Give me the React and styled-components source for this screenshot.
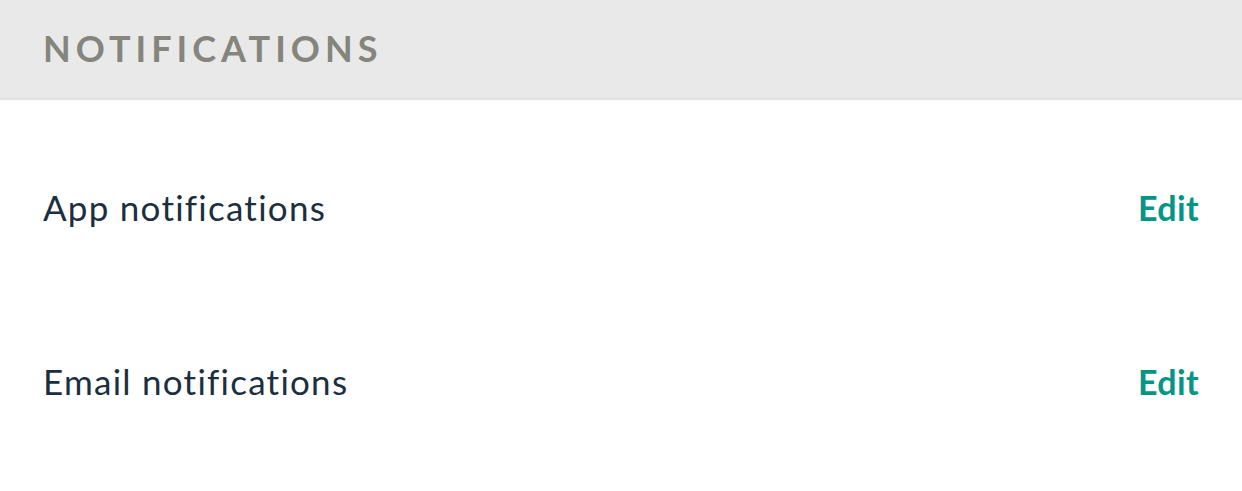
import React from "react";
import styled, { createGlobalStyle } from "styled-components";

const Global = createGlobalStyle`
  html, body { margin: 0; padding: 0; background: #ffffff; }
  body { font-family: Lato, "Noto Sans", sans-serif; }
`;

const Page = styled.div`
  width: 1242px;
`;

const Header = styled.div`
  height: 98px;
  background: #e9e9e9;
  border-bottom: 2px solid #e2e2e0;
  display: flex;
  align-items: center;
  padding: 0 43px;
`;

const Title = styled.h2`
  margin: 0;
  margin-top: -2px;
  font-size: 36px;
  font-weight: 700;
  letter-spacing: 5px;
  color: #85857d;
  text-transform: uppercase;
`;

const List = styled.div`
  padding-top: 20px;
  display: flex;
  flex-direction: column;
`;

const Row = styled.div`
  height: 174px;
  display: flex;
  align-items: center;
  justify-content: space-between;
  padding: 0 43px;
`;

const Label = styled.span`
  font-size: 35px;
  font-weight: 400;
  letter-spacing: 1.25px;
  color: #1b2f40;
`;

const EditLink = styled.a`
  font-size: 34px;
  font-weight: 700;
  letter-spacing: 0.4px;
  color: #039585;
  text-decoration: none;
  cursor: pointer;
`;

const items = ["App notifications", "Email notifications"];

export default function App() {
  return (
    <Page>
      <Global />
      <Header>
        <Title>Notifications</Title>
      </Header>
      <List>
        {items.map((t) => (
          <Row key={t}>
            <Label>{t}</Label>
            <EditLink>Edit</EditLink>
          </Row>
        ))}
      </List>
    </Page>
  );
}
